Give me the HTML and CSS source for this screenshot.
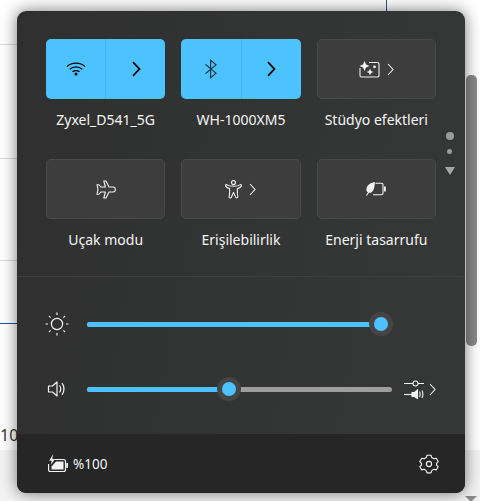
FILE: index.html
```html
<!DOCTYPE html>
<html lang="en">
<head>
    <meta charset="UTF-8">
    <meta name="viewport" content="width=device-width, initial-scale=1.0">
    <title>Quick Settings</title>
    <link rel="stylesheet" href="styles.css">
</head>
<body>
<!-- window behind the flyout -->
<div class="backdrop" aria-hidden="true">
    <div class="bg-lower"></div>
    <div class="bg-line line-a"></div>
    <div class="bg-line line-b"></div>
    <div class="bg-line line-c"></div>
    <div class="bg-line line-blue"></div>
    <div class="bg-vline"></div>
    <div class="bg-num">10</div>
    <div class="bg-thumb"></div>
    <div class="bg-arrow"></div>
</div>

<div class="panel">
    <div class="tiles-area">
        <div class="tiles">
            <div class="tile-wrap">
                <div class="tile active split">
                    <div class="tile-part">
                        <svg class="icon" width="20" height="16" viewBox="0 0 20 16" fill="none" stroke="#000" stroke-width="1.2">
                            <path d="M1 5.6C5.8 1 14.2 1 19 5.6"/>
                            <path d="M3.7 8.2C7.2 5 12.8 5 16.3 8.2"/>
                            <path d="M6.5 10.8C8.4 9.2 11.6 9.2 13.5 10.8"/>
                            <circle cx="10" cy="13" r="1.5" fill="#000" stroke="none"/>
                        </svg>
                    </div>
                    <div class="tile-part sep">
                        <svg class="icon" width="10" height="16" viewBox="0 0 10 16" fill="none" stroke="#000" stroke-width="1.8"><path d="M2 1.2L8.4 8L2 14.8"/></svg>
                    </div>
                </div>
                <div class="label">Zyxel_D541_5G</div>
            </div>
            <div class="tile-wrap">
                <div class="tile active split">
                    <div class="tile-part">
                        <svg class="icon" width="14" height="20" viewBox="0 0 14 20" fill="none" stroke="#1a2a33" stroke-width="1.1"><path d="M1.5 5.4L12 14.2L6.6 18.8V1.2L12 5.8L1.5 14.6"/></svg>
                    </div>
                    <div class="tile-part sep">
                        <svg class="icon" width="10" height="16" viewBox="0 0 10 16" fill="none" stroke="#000" stroke-width="1.8"><path d="M2 1.2L8.4 8L2 14.8"/></svg>
                    </div>
                </div>
                <div class="label">WH-1000XM5</div>
            </div>
            <div class="tile-wrap">
                <div class="tile">
                    <svg class="icon" width="21" height="18" viewBox="0 0 21 18" fill="none" stroke="#f2f2f2" stroke-width="1.1">
                        <path d="M10 2.5H18.5Q20 2.5 20 4V15.5Q20 17 18.5 17H2.5Q1 17 1 15.5V8"/>
                        <path d="M5.5 1L7 4.5L10.5 6L7 7.5L5.5 11L4 7.5L.5 6L4 4.5Z" fill="#f2f2f2" stroke="none"/>
                        <path d="M11 8.5L12 11L14.5 12L12 13L11 15.5L10 13L7.5 12L10 11Z" fill="#f2f2f2" stroke="none"/>
                        <circle cx="15.5" cy="6.8" r="1.4" fill="#f2f2f2" stroke="none"/>
                    </svg>
                    <svg class="chev" width="7" height="13" viewBox="0 0 7 13" fill="none" stroke="#f2f2f2" stroke-width="1.1"><path d="M1 1L6 6.5L1 12"/></svg>
                </div>
                <div class="label">Stüdyo efektleri</div>
            </div>
            <div class="tile-wrap">
                <div class="tile">
                    <svg class="icon" width="20" height="19" viewBox="0 0 20 19" fill="none" stroke="#f2f2f2" stroke-width="1.1" stroke-linejoin="round">
                        <path d="M7.8 1H10L13 7H17.2C20 7 20 12 17.2 12H13L10 18H7.8L9.4 12H4.8L3 14.2H1L2 9.5L1 4.8H3L4.8 7H9.4Z"/>
                    </svg>
                </div>
                <div class="label">Uçak modu</div>
            </div>
            <div class="tile-wrap">
                <div class="tile">
                    <svg class="icon" width="17" height="19" viewBox="0 0 17 19" fill="none" stroke="#f2f2f2" stroke-width="1.1" stroke-linejoin="round">
                        <circle cx="8.5" cy="2.6" r="2"/>
                        <path d="M1.6 4.6C3.5 5.8 5.4 6.2 8.5 6.2C11.6 6.2 13.5 5.8 15.4 4.6C16.4 4.4 16.8 6 15.9 6.7C14.8 7.6 13.6 8.2 12.4 8.6C12.2 11.5 12.4 14.2 12.9 17C12.7 18.2 11.2 18.3 10.8 17.4L8.5 12.4L6.2 17.4C5.8 18.3 4.3 18.2 4.1 17C4.6 14.2 4.8 11.5 4.6 8.6C3.4 8.2 2.2 7.6 1.1 6.7C.2 6 .6 4.4 1.6 4.6Z"/>
                    </svg>
                    <svg class="chev" width="7" height="13" viewBox="0 0 7 13" fill="none" stroke="#f2f2f2" stroke-width="1.1"><path d="M1 1L6 6.5L1 12"/></svg>
                </div>
                <div class="label">Erişilebilirlik</div>
            </div>
            <div class="tile-wrap">
                <div class="tile">
                    <svg class="icon" width="20" height="14" viewBox="0 0 20 14" fill="none" stroke="#f2f2f2" stroke-width="1.1">
                        <path d="M7 12.8H15.5Q17 12.8 17 11.3V2.7Q17 1.2 15.5 1.2H9.5"/>
                        <path d="M18 4.5H19.8V9.5H18Z" fill="#f2f2f2" stroke="none"/>
                        <path d="M9 0C3.5 1 .4 3.8 .4 7.5C.4 9.8 1.8 10.8 3.4 10.8C6.6 10.8 8.6 7.5 9 0Z" fill="#f2f2f2" stroke="none"/>
                        <path d="M.5 13.5L6 5" stroke="#f2f2f2"/>
                    </svg>
                </div>
                <div class="label">Enerji tasarrufu</div>
            </div>
        </div>
        <div class="pager">
            <span class="dot big"></span>
            <span class="dot small"></span>
            <span class="down"></span>
        </div>
    </div>

    <div class="sliders">
        <div class="slider-row">
            <svg class="row-icon" width="24" height="24" viewBox="0 0 24 24" fill="none" stroke="#f2f2f2" stroke-width="1.2">
                <circle cx="12" cy="12" r="5.6"/>
                <path d="M12 0.5V3M12 21V23.5M.5 12H3M21 12H23.5M3.9 3.9L5.6 5.6M18.4 18.4L20.1 20.1M3.9 20.1L5.6 18.4M18.4 5.6L20.1 3.9"/>
            </svg>
            <div class="track">
                <div class="fill" style="width:293px"></div>
                <span class="thumb" style="left:281.5px"></span>
            </div>
        </div>
        <div class="slider-row">
            <svg class="row-icon" width="24" height="24" viewBox="0 0 24 24" fill="none" stroke="#f2f2f2" stroke-width="1.2">
                <path d="M3.5 9H7.5L12 5V19L7.5 15H3.5Z" stroke-linejoin="round"/>
                <path d="M14.5 8.5C16 10.5 16 13.5 14.5 15.5"/>
                <path d="M17 6.2C19.6 9.5 19.6 14.5 17 17.8"/>
            </svg>
            <div class="track">
                <div class="fill" style="width:141px"></div>
                <span class="thumb" style="left:129.5px"></span>
            </div>
            <div class="mixer">
                <svg width="21" height="20" viewBox="0 0 21 20" fill="none" stroke="#f2f2f2" stroke-width="1.1">
                    <path d="M1 4.5H10M15 4.5H21"/>
                    <circle cx="12.5" cy="4.5" r="2.5"/>
                    <path d="M1 15.5H9"/>
                    <path d="M9 13.5H11.5L14.5 11V19.5L11.5 17.5H9Z" fill="#f2f2f2"/>
                    <path d="M16.5 12.5C17.4 14.2 17.4 16.2 16.5 18M19 11.5C20.2 14 20.2 16.5 19 19"/>
                </svg>
                <svg class="chev" width="7" height="13" viewBox="0 0 7 13" fill="none" stroke="#f2f2f2" stroke-width="1.1"><path d="M1 1L6 6.5L1 12"/></svg>
            </div>
        </div>
    </div>

    <div class="footer">
        <div class="battery">
            <svg width="20" height="19" viewBox="0 0 20 19" fill="none" stroke="#f2f2f2" stroke-width="1.2">
                <path d="M6.5 5.5H15.5Q17.5 5.5 17.5 7.5V15.5Q17.5 17.5 15.5 17.5H2.5Q.6 17.5 .6 15.5V10"/>
                <path d="M8 7.5H15.5V15.5H3.5V12.5Z" fill="#f2f2f2" stroke="none"/>
                <path d="M18.2 9H20V14H18.2Z" fill="#f2f2f2" stroke="none"/>
                <path d="M5.2 0L1.2 6.8H3.8L2.8 11L7 5H4.2Z" fill="#f2f2f2" stroke="none"/>
            </svg>
            <span>%100</span>
        </div>
        <svg width="20" height="20" viewBox="0 0 20 20" fill="none" stroke="#f2f2f2" stroke-width="1.1" stroke-linejoin="round">
            <circle cx="10" cy="10" r="2.6"/>
            <path d="M8 1.2H12L12.7 3.6L14.9 4.8L17.3 4.2L19.2 7.6L17.5 9.4V11L19.2 12.6L17.3 15.9L14.9 15.3L12.7 16.6L12 18.9H8L7.3 16.6L5.1 15.3L2.7 15.9L.8 12.6L2.5 11V9.4L.8 7.6L2.7 4.2L5.1 4.8L7.3 3.6Z"/>
        </svg>
    </div>
</div>
</body>
</html>
```

FILE: styles.css
```css
:root {
    --footer-bg: #262626;
    --tile-bg: #3d3d3d;
    --tile-border: #494949;
    --accent: #4cc2ff;
    --text-color: #f5f5f5;
}

* {
    margin: 0;
    padding: 0;
    box-sizing: border-box;
}

html, body {
    height: 100%;
    overflow: hidden;
}

body {
    position: relative;
    background: #fff;
    padding: 11px 0 0 17px;
    font-family: 'Noto Sans', 'Open Sans', sans-serif;
    color: var(--text-color);
}

/* window behind the flyout */
.backdrop {
    position: absolute;
    inset: 0;
}

.bg-lower {
    position: absolute;
    left: 0;
    right: 0;
    top: 450px;
    bottom: 0;
    background: #f3f3f3;
}

.bg-line {
    position: absolute;
    left: 0;
    width: 20px;
    height: 1px;
    background: #d9d9d9;
}

.line-a { top: 44px; }
.line-b { top: 158px; }
.line-c { top: 260px; }
.line-blue { top: 323px; background: #1c5a94; }

.bg-vline {
    position: absolute;
    left: 386px;
    top: 0;
    width: 1px;
    height: 12px;
    background: #1c5a94;
}

.bg-num {
    position: absolute;
    left: 0;
    top: 424px;
    font-size: 16px;
    line-height: 22px;
    color: #333;
}

.bg-thumb {
    position: absolute;
    left: 466px;
    top: 75px;
    width: 11px;
    height: 271px;
    border-radius: 5px;
    background: #8a8a8a;
}

.bg-arrow {
    position: absolute;
    left: 465px;
    top: 496px;
    border-left: 6px solid transparent;
    border-right: 6px solid transparent;
    border-top: 6px solid #8a8a8a;
}

.panel {
    position: relative;
    display: flex;
    flex-direction: column;
    width: 448px;
    height: 482px;
    background: linear-gradient(100deg, #2f2f2f, #363838);
    border-radius: 9px;
    box-shadow: 0 0 16px rgba(0, 0, 0, 0.55);
}

.tiles-area {
    display: flex;
    height: 266px;
    padding: 28px 0 0 29px;
    border-bottom: 1px solid #3f3f3f;
}

.tiles {
    display: grid;
    grid-template-columns: repeat(3, 119.33px);
    grid-auto-rows: 120px;
    column-gap: 16px;
    width: 390px;
}

.tile-wrap {
    display: flex;
    flex-direction: column;
    align-items: center;
}

.tile {
    display: flex;
    align-items: center;
    justify-content: center;
    gap: 7px;
    width: 100%;
    height: 60px;
    background: var(--tile-bg);
    border: 1px solid var(--tile-border);
    border-radius: 5px;
}

.tile.active {
    background: var(--accent);
    border: 0;
}

.tile.split {
    gap: 0;
}

.tile-part {
    flex: 1;
    height: 100%;
    display: flex;
    align-items: center;
    justify-content: center;
}

.tile-part.sep {
    border-left: 1px solid #45b3ec;
}

.label {
    margin-top: 11px;
    font-size: 14px;
    line-height: 20px;
    white-space: nowrap;
}

.pager {
    display: flex;
    flex-direction: column;
    align-items: center;
    width: 20px;
    margin: 93px 0 0 3.5px;
}

.dot {
    border-radius: 50%;
    background: #9a9a9a;
}

.dot.big {
    width: 8px;
    height: 8px;
}

.dot.small {
    width: 5px;
    height: 5px;
    margin-top: 8.5px;
}

.down {
    margin-top: 13px;
    border-left: 5px solid transparent;
    border-right: 5px solid transparent;
    border-top: 8px solid #a6a6a6;
}

.sliders {
    flex: 1;
    display: flex;
    flex-direction: column;
    gap: 41px;
    padding: 35px 0 0 28px;
}

.slider-row {
    display: flex;
    align-items: center;
    height: 24px;
}

.row-icon {
    flex: none;
}

.track {
    position: relative;
    width: 305px;
    height: 5px;
    margin-left: 18px;
    border-radius: 3px;
    background: #9e9e9e;
}

.fill {
    height: 100%;
    border-radius: 3px;
    background: var(--accent);
}

.thumb {
    position: absolute;
    top: -9.5px;
    width: 24px;
    height: 24px;
    border: 5.5px solid #454545;
    border-radius: 50%;
    background: var(--accent);
}

.mixer {
    display: flex;
    align-items: center;
    gap: 5px;
    margin-left: 11px;
}

.footer {
    display: flex;
    align-items: center;
    justify-content: space-between;
    height: 59px;
    margin-top: auto;
    padding: 0 26px 0 31px;
    background: var(--footer-bg);
    border-radius: 0 0 9px 9px;
}

.battery {
    display: flex;
    align-items: center;
    gap: 5px;
    font-size: 13.5px;
}
```
